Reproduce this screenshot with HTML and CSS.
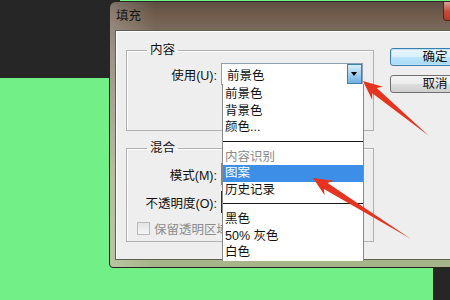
FILE: index.html
```html
<!DOCTYPE html>
<html lang="zh-CN">
  <head>
    <meta charset="UTF-8">
    <title>填充</title>
    <link rel="stylesheet" href="styles.css">
  </head>
  <body>
    <div class="desktop">
      <div class="window">
        <div class="titlebar">
          <span class="title">填充</span>
          <span class="close"></span>
        </div>
        <div class="client">
          <div class="groups">
            <fieldset class="group group-content">
              <legend>内容</legend>
              <div class="row">
                <label class="label">使用(U):</label>
                <div class="combo">
                  <span class="combo-value">前景色</span>
                  <span class="combo-btn"></span>
                  <ul class="droplist">
                    <li>前景色</li>
                    <li>背景色</li>
                    <li>颜色...</li>
                    <li class="sep"></li>
                    <li class="disabled">内容识别</li>
                    <li class="selected">图案</li>
                    <li>历史记录</li>
                    <li class="sep"></li>
                    <li>黑色</li>
                    <li>50% 灰色</li>
                    <li>白色</li>
                  </ul>
                </div>
              </div>
            </fieldset>
            <fieldset class="group group-blend">
              <legend>混合</legend>
              <div class="row">
                <label class="label">模式(M):</label>
                <div class="combo combo-mode"></div>
              </div>
              <div class="row row-opacity">
                <label class="label">不透明度(O):</label>
                <div class="field"></div>
              </div>
              <div class="check-row">
                <span class="checkbox"></span>
                <span class="check-label">保留透明区域</span>
              </div>
            </fieldset>
          </div>
          <div class="buttons">
            <button class="btn btn-default">确定</button>
            <button class="btn">取消</button>
          </div>
        </div>
      </div>

      <!-- 标注箭头 -->
      <svg class="arrows" width="450" height="300" viewBox="0 0 450 300">
        <polygon fill="#e5341f" transform="translate(363 81) rotate(39.8)" points="0,0 19,-8.5 15,-3.5 86,0 15,3.5 19,8.5"/>
        <polygon fill="#e5341f" transform="translate(313 178) rotate(31.9)" points="0,0 19,-8.5 15,-3.5 115,0 15,3.5 19,8.5"/>
      </svg>
    </div>
  </body>
</html>
```

FILE: styles.css
```css
html, body {
  margin: 0;
  padding: 0;
}

body {
  font-family: "Liberation Sans", "Noto Sans CJK SC", sans-serif;
  font-size: 12.5px;
  color: #111;
}

.desktop {
  position: relative;
  width: 450px;
  height: 300px;
  overflow: hidden;
  background:
    linear-gradient(#262626, #262626) left top / 120px 78px no-repeat,
    linear-gradient(#262626, #262626) right bottom / 17px 32px no-repeat,
    #72f087;
}

/* 对话框窗口 */
.window {
  position: absolute;
  left: 109px;
  top: 1px;
  width: 383px;
  height: 267px;
  box-sizing: border-box;
  padding: 0 5px 7px 5px;
  border: 1px solid #2a2520;
  border-radius: 7px 7px 4px 4px;
  display: flex;
  flex-direction: column;
  background:
    linear-gradient(90deg, rgba(255,255,255,0.22), rgba(255,255,255,0) 45px),
    linear-gradient(180deg, #5c4e42 0, #6f5b4a 12px, #7a6a5c 28px, #8e8a76 90px, #a3ad85 170px, #a8b48a 100%);
}

.titlebar {
  height: 28px;
  display: flex;
  align-items: flex-start;
}

.title {
  padding-left: 1px;
  line-height: 28px;
  color: #151515;
}

.close {
  margin-left: auto;
  width: 43px;
  height: 19px;
  box-sizing: border-box;
  border: 1px solid #5a2118;
  border-top: none;
  border-radius: 0 0 4px 4px;
  background: linear-gradient(#d9a093, #c4493b 55%, #b83a2c);
}

.client {
  flex: 1;
  display: flex;
  padding: 11px 0 0 10px;
  border: 1px solid #5e6050;
  background: #eeeeee;
  box-shadow: inset 1px 1px 0 #fff;
}

.groups {
  width: 248px;
}

/* 分组框 */
.group {
  margin: 0;
  padding: 5px 10px 45px 0;
  border: 1px solid #b0b0b0;
  box-shadow: inset 1px 1px 0 #fff;
}

.group legend {
  margin-left: 20px;
  padding: 0 3px;
  line-height: 16px;
}

.group-blend {
  margin-top: 9px;
  padding-top: 7px;
  padding-bottom: 5px;
}

.row {
  display: flex;
  align-items: center;
  height: 22px;
}

.row-opacity {
  margin-top: 6px;
}

.label {
  width: 90px;
  margin-right: 4px;
  text-align: right;
}

.combo {
  position: relative;
  width: 142px;
  height: 22px;
  box-sizing: border-box;
  border: 1px solid #8e9fb2;
  background: #fff;
  display: flex;
  align-items: center;
}

.combo-value {
  padding-left: 5px;
  flex: 1;
}

.combo-btn {
  width: 15px;
  height: 20px;
  box-sizing: border-box;
  border: 1px solid #3c7fb1;
  background: linear-gradient(#d9eefb, #a9d3f1 45%, #6fb0e0);
  position: relative;
}

.combo-btn::after {
  content: "";
  position: absolute;
  left: 3px;
  top: 7px;
  border-left: 3.5px solid transparent;
  border-right: 3.5px solid transparent;
  border-top: 4px solid #000;
}

/* 下拉列表 */
.droplist {
  position: absolute;
  top: 100%;
  left: 0;
  width: 142px;
  margin: 0;
  padding: 2px 0 0 0;
  box-sizing: border-box;
  list-style: none;
  background: #fff;
  border: 1px solid #8a8a8a;
  border-top: none;
  border-bottom: none;
  z-index: 2;
}

.droplist li {
  line-height: 16.5px;
  padding-left: 2px;
  white-space: nowrap;
}

.droplist li.sep {
  height: 1px;
  margin: 5px 0 7px;
  padding: 0;
  background: #1a1a1a;
}

.droplist li.disabled {
  color: #8a8a8a;
}

.droplist li.selected {
  background: #3d8ee6;
  color: #fff;
}

.combo-mode {
  border-color: #4b8fd0;
}

.field {
  width: 142px;
  height: 22px;
  box-sizing: border-box;
  border: 1px solid #333;
  background: #fff;
}

.check-row {
  display: flex;
  align-items: center;
  height: 16px;
  margin-top: 7px;
  padding-left: 10px;
  white-space: nowrap;
  overflow: hidden;
}

.checkbox {
  width: 11px;
  height: 11px;
  border: 1px solid #b9b9b9;
  background: linear-gradient(#e4e4e4, #f6f6f6);
  margin-right: 4px;
}

.check-label {
  color: #8d8d8d;
}

/* 按钮 */
.buttons {
  margin-left: 16px;
  padding-top: 6px;
  display: flex;
  flex-direction: column;
  gap: 9px;
}

.btn {
  width: 90px;
  height: 18px;
  padding: 0;
  font: inherit;
  line-height: 16px;
  color: #111;
  border: 1px solid #707070;
  border-radius: 3px;
  background: linear-gradient(#f3f3f3, #ebebeb 50%, #dddddd 51%, #cfcfcf);
}

.btn-default {
  border-color: #3c7fb1;
  background: linear-gradient(#eaf6fd, #d9f0fc 50%, #bee6fd 51%, #a7d9f5);
  box-shadow: 0 0 0 1px #bfe0f5 inset;
}

.arrows {
  position: absolute;
  left: 0;
  top: 0;
  pointer-events: none;
  z-index: 5;
}
```
